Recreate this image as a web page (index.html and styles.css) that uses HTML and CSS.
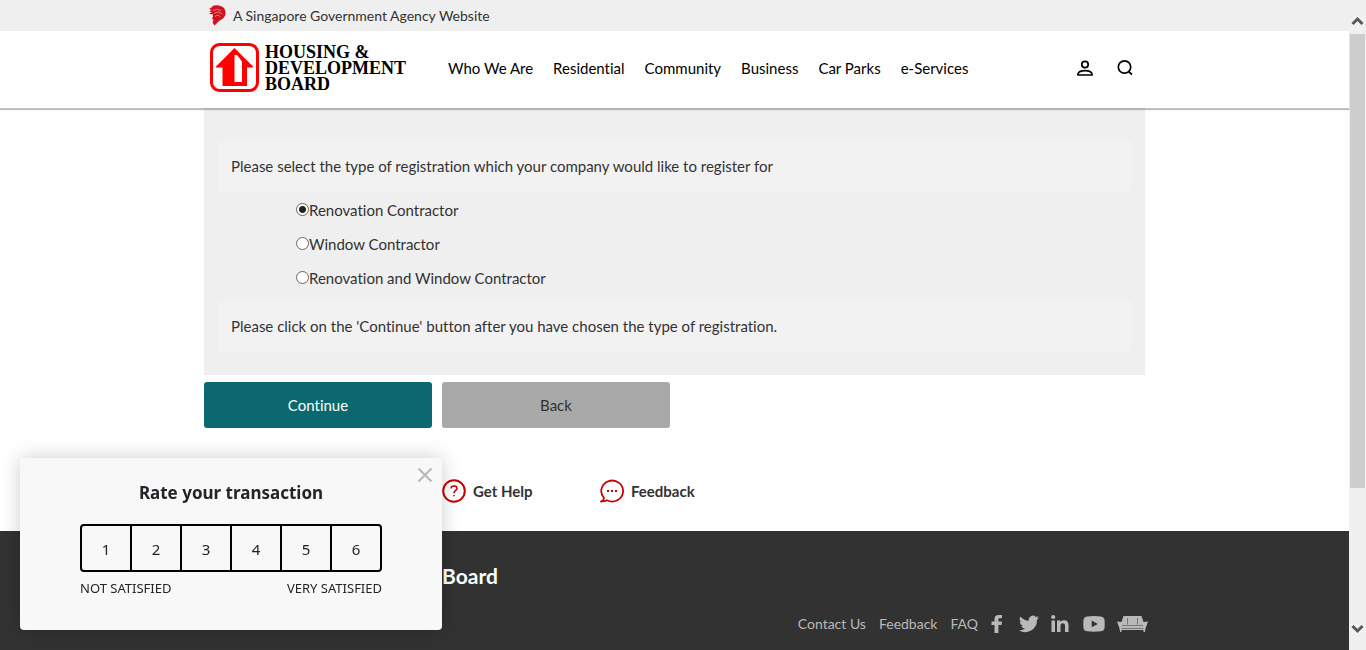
FILE: index.html
```
<!DOCTYPE html>
<html lang="en">
<head>
<meta charset="utf-8">
<meta name="viewport" content="width=device-width, initial-scale=1">
<title>Housing &amp; Development Board</title>
<link rel="stylesheet" href="styles.css">
</head>
<body class="window">
<div class="page">
  <div class="gov-bar">
    <div class="container gov-inner">
      <svg class="lion" viewBox="0 0 18 21" aria-hidden="true">
        <path fill="#d4111b" d="M1 4 5 1.500 3.500 1.200Q9-.5 13 1.200 17 2.500 17.500 7 18 11 15 13.500L11 16 6.500 20.500 4.500 17.500 5.500 15 4 13.500 5 11.500 2.500 10.500 1.500 8.500 4 7 1 6.500 3.500 5Z"/>
        <path fill="none" stroke="#f0efef" stroke-width=".5" d="M5 5.500Q9 3 13 5.500M6 8.500Q10 5.500 14.500 9M7 11.500Q10 8.500 12.500 12"/>
        <path fill="#f0efef" d="M0 9.500 4.500 9 5 11 3.500 13.500 0 14Z"/>
      </svg>
      <span>A Singapore Government Agency Website</span>
    </div>
  </div>

  <header class="site-header">
    <div class="container header-inner">
      <a class="logo" href="#">
        <svg class="logo-mark" viewBox="0 0 50 50" aria-hidden="true">
          <rect x="2.500" y="1.500" width="46" height="46" rx="8" fill="#fff" stroke="#fe0000" stroke-width="3"/>
          <path fill="#fe0000" fill-rule="evenodd" d="M25.500 5 44 23.500V24.500H38V43H13.500V24.500H7V23.500ZM25.500 12V39H33V18.500L28 12Z"/>
        </svg>
        <span class="logo-text">HOUSING &amp;<br>DEVELOPMENT<br>BOARD</span>
      </a>
      <nav class="main-nav">
        <a href="#">Who We Are</a>
        <a href="#">Residential</a>
        <a href="#">Community</a>
        <a href="#">Business</a>
        <a href="#">Car Parks</a>
        <a href="#">e-Services</a>
      </nav>
      <div class="tools">
        <button class="tool" type="button" aria-label="Account">
          <svg viewBox="0 0 18 18" fill="none" stroke="#000" stroke-width="1.700"><circle cx="9" cy="5.500" r="3.200"/><path d="M2 16V15C3 10.500 15 10.500 16 15V16Z"/></svg>
        </button>
        <button class="tool" type="button" aria-label="Search">
          <svg viewBox="0 0 18 18" fill="none" stroke="#000" stroke-width="1.700"><circle cx="8.500" cy="8" r="6.200"/><path d="M12.500 12.500 16 15.500"/></svg>
        </button>
      </div>
    </div>
  </header>

  <main class="container">
    <form class="registration">
      <fieldset class="panel">
        <legend class="note">Please select the type of registration which your company would like to register for</legend>
        <div class="options">
          <label class="option"><input type="radio" name="type" checked>Renovation Contractor</label>
          <label class="option"><input type="radio" name="type">Window Contractor</label>
          <label class="option"><input type="radio" name="type">Renovation and Window Contractor</label>
        </div>
        <p class="note">Please click on the 'Continue' button after you have chosen the type of registration.</p>
      </fieldset>
      <div class="actions">
        <button class="btn btn-primary" type="button">Continue</button>
        <button class="btn btn-secondary" type="button">Back</button>
      </div>
    </form>
    <div class="help-row">
      <a class="help-link" href="#">
        <svg viewBox="0 0 24 24" fill="none" stroke="#c80000" aria-hidden="true"><circle cx="12" cy="12" r="10.800" stroke-width="2"/><path stroke-width="1.500" d="M9 9.500C9 6 15 6 15 9.500 15 11.500 12 11.500 12 14.200"/><circle cx="12" cy="16.700" r=".5"/></svg>
        Get Help
      </a>
      <a class="help-link" href="#">
        <svg viewBox="0 0 24 24" aria-hidden="true"><path fill="none" stroke="#c80000" stroke-width="1.800" d="M4 19A10.900 10.500 0 1 1 7 21.300Q4.500 22.600 1.500 22.400 4 21 4 19Z"/><path fill="#c80000" d="M7 11h2v2H7zM11 11h2v2h-2zM15 11h2v2h-2z"/></svg>
        Feedback
      </a>
    </div>
  </main>

  <footer class="footer">
    <div class="container">
      <h2 class="footer-title">Board</h2>
      <div class="footer-links">
        <a href="#">Contact Us</a>
        <a href="#">Feedback</a>
        <a href="#">FAQ</a>
        <div class="social">
          <a href="#" aria-label="Facebook"><svg width="16" height="20" viewBox="0 0 16 20"><path fill="#b9b9b9" d="M3.500 19V11H.5V7.500H3.500V5C3.500 2 5 1 8 1h3v3.200H9C7.700 4.200 7.400 4.600 7.400 5.700V7.500H11L10.500 11H7.400v8Z"/></svg></a>
          <a href="#" aria-label="Twitter"><svg width="20" height="20" viewBox="0 0 24 20"><path fill="#b9b9b9" d="M24 2.400a10 10 0 0 1-2.800.8A5 5 0 0 0 23.300.5a10 10 0 0 1-3.100 1.200A4.900 4.900 0 0 0 11.800 6.200 14 14 0 0 1 1.700 1a4.900 4.900 0 0 0 1.500 6.600A5 5 0 0 1 1 7v.1A4.900 4.900 0 0 0 5 11.900a5 5 0 0 1-2.200.1 4.900 4.900 0 0 0 4.600 3.400A10 10 0 0 1 0 17.400 14 14 0 0 0 21.500 5a10 10 0 0 0 2.500-2.600Z"/></svg></a>
          <a href="#" aria-label="LinkedIn"><svg width="20" height="20" viewBox="0 0 20 20"><path fill="#b9b9b9" d="M.5 6.500H4V18H.5ZM6 6.500h3.500V8C11 5.600 17.500 5.200 17.500 11v7H14v-6.500c0-3-4.500-3-4.500 0V18H6Z"/><circle cx="2.200" cy="3" r="2.100" fill="#b9b9b9"/></svg></a>
          <a href="#" aria-label="YouTube"><svg width="22" height="20" viewBox="0 0 22 20"><path fill="#b9b9b9" fill-rule="evenodd" d="M4 2.500Q11 1.500 18 2.500 21 3 21.500 5.500 22 10 21.500 14.500 21 17 18 17.300 11 18 4 17.300 1 17 .5 14.500 0 10 .5 5.500 1 3 4 2.500ZM8.700 6.500V13.300L14.800 9.900Z"/></svg></a>
          <a href="#" aria-label="MyNiceHome"><svg width="31" height="20" viewBox="0 0 31 20"><path fill="#b9b9b9" d="M6.500 2h18L26.500 8 31 7.500 28.500 14.500 28 18H26.500V16H4.500V18H3.200L2.500 14.500 0 7.500 4.500 8Z"/><path fill="none" stroke="#777" stroke-width="1" d="M10.500 4V10.500M20.500 4V10.500M5 11.500H26M4.500 14.500H26.500"/></svg></a>
        </div>
      </div>
    </div>
  </footer>
</div>

<div class="scrollbar" aria-hidden="true">
  <svg class="arrow" viewBox="0 0 13 10"><path fill="none" stroke="#585858" stroke-width="3" d="M1.500 8 6.500 3 11.500 8"/></svg>
  <div class="track"><div class="thumb"></div></div>
  <svg class="arrow" viewBox="0 0 13 10"><path fill="none" stroke="#585858" stroke-width="3" d="M1.500 2 6.500 7 11.500 2"/></svg>
</div>

<section class="survey" aria-labelledby="survey-title">
  <button class="survey-close" type="button" aria-label="Close"><svg viewBox="0 0 16 16"><path fill="none" stroke="#b8b8b8" stroke-width="2" d="M1.500 1.500 14.500 14.500M14.500 1.500 1.500 14.500"/></svg></button>
  <h2 class="survey-title" id="survey-title">Rate your transaction</h2>
  <div class="scale">
    <button type="button">1</button>
    <button type="button">2</button>
    <button type="button">3</button>
    <button type="button">4</button>
    <button type="button">5</button>
    <button type="button">6</button>
  </div>
  <div class="scale-labels"><span>NOT SATISFIED</span><span>VERY SATISFIED</span></div>
</section>
</body>
</html>
```

FILE: styles.css
```
* { box-sizing: border-box; }

.window {
  margin: 0;
  display: flex;
  height: 100vh;
  overflow: hidden;
  background: #fff;
  color: #323232;
  font: 15px/24px Lato, "Open Sans", sans-serif;
  font-variant-ligatures: none;
}

a { color: inherit; text-decoration: none; }
button { font: inherit; color: inherit; cursor: pointer; }
svg { display: block; }

.page {
  flex: 1;
  min-width: 0;
  display: flex;
  flex-direction: column;
}

.container {
  width: 100%;
  max-width: 941px;
  margin: 0 auto;
}

.gov-bar {
  background: #f0efef;
  font-size: 14px;
  line-height: 31px;
}

.gov-inner { display: flex; align-items: center; gap: 7px; padding-left: 4px; }
.lion { width: 18px; height: 21px; }

.site-header {
  position: relative;
  background: #fff;
  box-shadow: 0 2px 1px rgba(0, 0, 0, .25);
  color: #000;
}

.header-inner {
  display: flex;
  align-items: center;
  height: 77px;
  padding: 0 11px 3px 5px;
}

.logo { display: flex; align-items: center; gap: 6px; width: 239px; }
.logo-mark { width: 50px; height: 50px; }
.logo-text { font: bold 18px/16px "Liberation Serif", serif; }

.main-nav { display: flex; gap: 20px; white-space: nowrap; }

.tools { display: flex; gap: 22px; margin-left: auto; }
.tool { width: 18px; height: 18px; padding: 0; border: 0; background: none; }

.registration { margin: 0; }

.panel {
  margin: 0;
  padding: 33px 14px 24px;
  border: 0;
  background: #efefef;
}

.note {
  float: left;
  width: 100%;
  margin: 0;
  padding: 13px;
  background: #f2f2f2;
}

.options {
  clear: both;
  padding: 2px 0 6px 78px;
}

.option { display: flex; align-items: center; height: 34px; }

.option input {
  appearance: none;
  width: 13px;
  height: 13px;
  margin: 0 0 2px;
  border: 1px solid #666;
  border-radius: 50%;
  background: #fff;
}

.option input:checked { background: radial-gradient(circle, #222 3px, #fff 4px); }

.actions { display: flex; gap: 10px; padding-top: 7px; }

.btn {
  width: 228px;
  height: 46px;
  padding: 0;
  border: 0;
  border-radius: 3px;
}

.btn-primary { background: #0b686e; color: #fff; }
.btn-secondary { background: #a9a9a9; }

.help-row {
  display: flex;
  padding: 51px 0 28px 238px;
  font-weight: bold;
}

.help-link { display: flex; align-items: center; gap: 7px; width: 158px; }
.help-link svg { width: 24px; height: 24px; }

.footer {
  flex: 1;
  padding-top: 31px;
  background: #323232;
}

.footer-title {
  margin: 0;
  padding-left: 238px;
  color: #fff;
  font-size: 21px;
  line-height: 28px;
}

.footer-links {
  display: flex;
  justify-content: flex-end;
  align-items: center;
  gap: 13px;
  padding-top: 22px;
  color: #b9b9b9;
  font-size: 14px;
}

.social { display: flex; align-items: center; gap: 12px; margin-right: -3px; }

.scrollbar {
  display: flex;
  flex-direction: column;
  align-items: center;
  width: 17px;
  padding: 16px 1px;
  background: #f0f0f0;
}

.arrow { width: 13px; height: 10px; }
.track { flex: 1; width: 15px; padding: 8px 0; }
.thumb { height: 78%; background: #cdcdcd; }

.survey {
  position: fixed;
  left: 20px;
  bottom: 20px;
  width: 422px;
  padding: 23px 60px 30px;
  border-radius: 4px;
  background: #f8f8f8;
  box-shadow: 0 0 20px rgba(0, 0, 0, .2);
  color: #212529;
  font-family: "Noto Sans", sans-serif;
}

.survey-close {
  position: absolute;
  top: 9px;
  right: 9px;
  width: 16px;
  height: 16px;
  padding: 0;
  border: 0;
  background: none;
}

.survey-title {
  margin: 0 0 19px;
  font-size: 17px;
  line-height: 24px;
  text-align: center;
}

.scale {
  display: flex;
  height: 48px;
  border: 2px solid #000;
  border-radius: 4px;
}

.scale button {
  flex: 1;
  padding: 2px 0 0;
  border: 0;
  background: none;
}

.scale button + button { border-left: 2px solid #000; }

.scale-labels {
  display: flex;
  justify-content: space-between;
  padding-top: 4px;
  font-size: 13px;
  line-height: 24px;
}
```
